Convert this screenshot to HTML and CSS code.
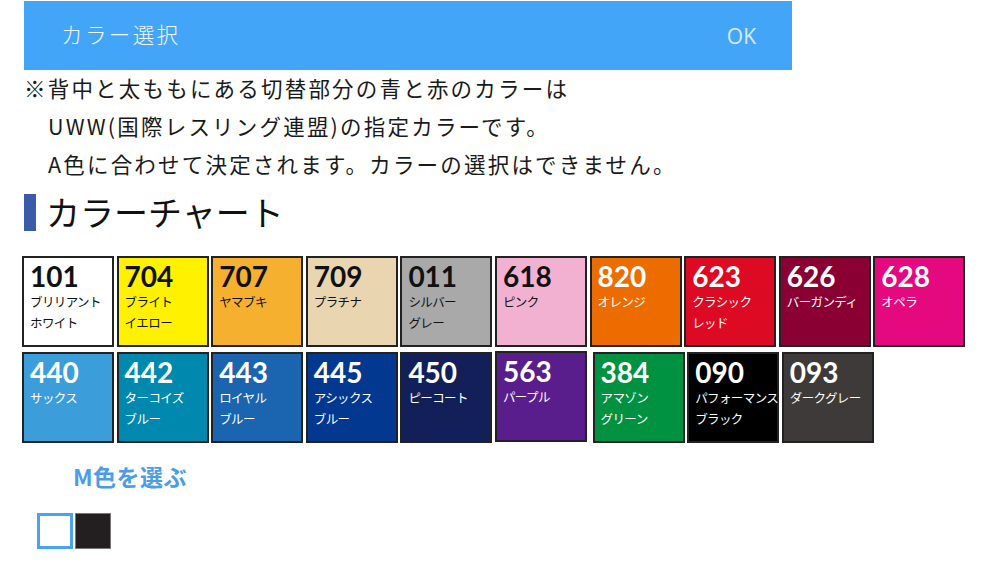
FILE: index.html
```html
<!DOCTYPE html>
<html lang="ja">
<head>
    <meta charset="utf-8">
    <title>カラー選択</title>
    <link rel="stylesheet" href="styles.css">
</head>
<body>
    <div class="page">
        <div class="topbar">
            <span class="topbar-title">カラー選択</span>
            <span class="topbar-ok">OK</span>
        </div>

        <div class="note">
            <p>※背中と太ももにある切替部分の青と赤のカラーは</p>
            <p class="indent">UWW(国際レスリング連盟)の指定カラーです。</p>
            <p class="indent">A色に合わせて決定されます。カラーの選択はできません。</p>
        </div>

        <h2 class="chart-title">カラーチャート</h2>

        <div class="chart">
            <div class="swatch" style="background:#ffffff"><b>101</b><span>ブリリアント<br>ホワイト</span></div>
            <div class="swatch" style="background:#fff100"><b>704</b><span>ブライト<br>イエロー</span></div>
            <div class="swatch" style="background:#f6b02f"><b>707</b><span>ヤマブキ</span></div>
            <div class="swatch" style="background:#e9d6b0"><b>709</b><span>プラチナ</span></div>
            <div class="swatch" style="background:#a9a9a9"><b>011</b><span>シルバー<br>グレー</span></div>
            <div class="swatch" style="background:#f3b1d1"><b>618</b><span>ピンク</span></div>
            <div class="swatch light" style="background:#ec6c00"><b>820</b><span>オレンジ</span></div>
            <div class="swatch light" style="background:#dc0a23"><b>623</b><span>クラシック<br>レッド</span></div>
            <div class="swatch light" style="background:#8a0033"><b>626</b><span>バーガンディ</span></div>
            <div class="swatch light" style="background:#e4097f"><b>628</b><span>オペラ</span></div>

            <div class="swatch light" style="background:#3b9edb"><b>440</b><span>サックス</span></div>
            <div class="swatch light" style="background:#0088ae"><b>442</b><span>ターコイズ<br>ブルー</span></div>
            <div class="swatch light" style="background:#1a64b0"><b>443</b><span>ロイヤル<br>ブルー</span></div>
            <div class="swatch light" style="background:#023890"><b>445</b><span>アシックス<br>ブルー</span></div>
            <div class="swatch light" style="background:#121f58"><b>450</b><span>ピーコート</span></div>
            <div class="swatch light up" style="background:#5a1e8c"><b>563</b><span>パープル</span></div>
            <div class="swatch light right" style="background:#009241"><b>384</b><span>アマゾン<br>グリーン</span></div>
            <div class="swatch light" style="background:#000000"><b>090</b><span>パフォーマンス<br>ブラック</span></div>
            <div class="swatch light" style="background:#3e3a39"><b>093</b><span>ダークグレー</span></div>
        </div>

        <div class="pick-title">M色を選ぶ</div>
        <div class="picks">
            <div class="pick selected"></div>
            <div class="pick black"></div>
        </div>
    </div>
</body>
</html>
```

FILE: styles.css
```css
body {
    margin: 0;
    padding: 0;
    background: #fff;
    font-family: "Noto Sans CJK JP", "Noto Sans", sans-serif;
    color: #111;
}
.page {
    padding: 1px 0 0 24px;
}
.topbar {
    width: 768px;
    height: 69px;
    background: #42a5f8;
    display: flex;
    align-items: center;
    justify-content: space-between;
    box-sizing: border-box;
    padding: 0 36px 4px 37px;
}
.topbar-title {
    color: #f2f8ff;
    font-size: 21.5px;
    font-weight: 300;
    letter-spacing: 2.4px;
}
.topbar-ok {
    color: #d8ecff;
    font-family: "Open Sans", "Noto Sans", sans-serif;
    font-size: 21px;
    margin-top: 4px;
}
.note {
    margin-top: -1px;
}
.note p {
    margin: 0;
    font-size: 21.5px;
    line-height: 38px;
    font-weight: 400;
    letter-spacing: 2.2px;
    color: #1a1a1a;
}
.note .indent {
    padding-left: 24px;
}
.chart-title {
    margin: 11px 0 0 0;
    font-size: 34px;
    font-weight: 400;
    border-left: 12px solid #3a5ca8;
    padding-left: 10px;
    height: 37px;
    line-height: 36px;
    color: #111;
}
.chart {
    margin: 25px 0 0 -2px;
    width: 950px;
    display: flex;
    flex-wrap: wrap;
    column-gap: 2.6px;
    row-gap: 5px;
}
.swatch {
    width: 92px;
    height: 91px;
    box-sizing: border-box;
    border: 2px solid #222;
    padding: 3px 0 0 6px;
    color: #111;
}
.swatch b {
    display: block;
    font-family: Lato, "Noto Sans", sans-serif;
    font-size: 28px;
    font-weight: 700;
    line-height: 30px;
}
.swatch span {
    display: block;
    margin-top: 0;
    font-size: 12.5px;
    line-height: 21px;
    letter-spacing: -0.6px;
    white-space: nowrap;
}
.swatch.light {
    color: #fff;
}
.swatch.up {
    margin-top: -1px;
    margin-bottom: 1px;
}
.swatch.right {
    margin-left: 3px;
}
.pick-title {
    margin: 16px 0 0 49px;
    font-size: 23px;
    font-weight: 700;
    letter-spacing: 0.5px;
    color: #4a9de6;
}
.picks {
    display: flex;
    gap: 2px;
    margin: 20px 0 0 13px;
}
.pick {
    width: 36px;
    height: 36px;
    box-sizing: border-box;
    background: #fff;
}
.pick.selected {
    border: 3px solid #4aa3ee;
}
.pick.black {
    background: #231f20;
    border: 1px solid #777;
}
```
